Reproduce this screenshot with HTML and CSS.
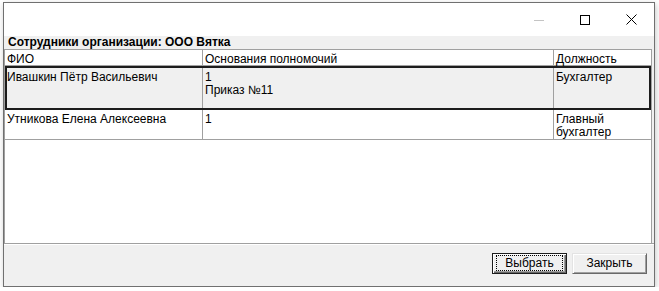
FILE: index.html
```html
<!DOCTYPE html>
<html lang="ru">
<head>
<meta charset="utf-8">
<title>Сотрудники организации</title>
<link rel="stylesheet" href="styles.css">
</head>
<body>
<div class="window">
  <div class="titlebar">
    <div class="cap-btn">
      <svg width="10" height="10" viewBox="0 0 10 10"><line x1="0" y1="5.5" x2="10" y2="5.5" stroke="#c4c4c4" stroke-width="1"/></svg>
    </div>
    <div class="cap-btn">
      <svg width="10" height="10" viewBox="0 0 10 10"><rect x="0.5" y="0.5" width="9" height="9" fill="none" stroke="#000" stroke-width="1"/></svg>
    </div>
    <div class="cap-btn">
      <svg width="11" height="11" viewBox="0 0 11 11"><path d="M0.5 0.5 L10.5 10.5 M10.5 0.5 L0.5 10.5" stroke="#000" stroke-width="1" fill="none"/></svg>
    </div>
  </div>
  <div class="client">
    <div class="caption-label">Сотрудники организации: ООО Вятка</div>
    <div class="grid">
      <div class="row header">
        <div class="cell c1">ФИО</div>
        <div class="cell c2">Основания полномочий</div>
        <div class="cell c3">Должность</div>
      </div>
      <div class="row data selected">
        <div class="cell c1">Ивашкин Пётр Васильевич</div>
        <div class="cell c2">1<br>Приказ №11</div>
        <div class="cell c3">Бухгалтер</div>
      </div>
      <div class="row data second">
        <div class="cell c1">Утникова Елена Алексеевна</div>
        <div class="cell c2">1</div>
        <div class="cell c3">Главный<br>бухгалтер</div>
      </div>
    </div>
    <div class="footer">
      <button class="btn default"><span class="focus">Выбрать</span></button>
      <button class="btn">Закрыть</button>
    </div>
  </div>
</div>
</body>
</html>
```

FILE: styles.css
```css
html, body {
  margin: 0;
  padding: 0;
  background: #ffffff;
}

body {
  font-family: "Liberation Sans", Arial, sans-serif;
  font-size: 12px;
  line-height: 13px;
  color: #000;
}

.window {
  box-sizing: border-box;
  margin: 2px 0 0 3px;
  width: 652px;
  height: 285px;
  border: 1px solid #707070;
  display: flex;
  flex-direction: column;
  box-shadow: 1px 2px 6px rgba(0, 0, 0, 0.22);
  background: #f0f0f0;
}

.titlebar {
  height: 33px;
  flex: none;
  background: #ffffff;
  display: flex;
  justify-content: flex-end;
}

.cap-btn {
  width: 46px;
  height: 33px;
  display: flex;
  align-items: center;
  justify-content: center;
}

.cap-btn svg {
  display: block;
}

.client {
  flex: 1;
  display: flex;
  flex-direction: column;
  background: #f0f0f0;
}

.caption-label {
  height: 13px;
  padding-left: 4px;
  font-weight: bold;
  line-height: 13px;
  white-space: nowrap;
}

.grid {
  box-sizing: border-box;
  height: 194px;
  margin-right: 2px;
  background: #ffffff;
  border-top: 1px solid #a0a0a0;
  border-left: 1px solid #a0a0a0;
  border-right: 1px solid #a0a0a0;
  flex: none;
}

.row {
  display: flex;
  box-sizing: border-box;
  border-bottom: 1px solid #a0a0a0;
}

.cell {
  box-sizing: border-box;
  padding-left: 2px;
  white-space: nowrap;
}

.c1 {
  width: 198px;
  border-right: 1px solid #a0a0a0;
}

.c2 {
  width: 351px;
  border-right: 1px solid #a0a0a0;
}

.c3 {
  flex: 1;
}

.header {
  height: 16px;
}

.header .cell {
  padding-top: 3px;
  line-height: 12px;
}

.selected .cell {
  padding-top: 5px;
}

.second .cell {
  padding-top: 3px;
}

.selected {
  height: 44px;
  background: #f0f0f0;
  position: relative;
}

.selected::after {
  content: "";
  position: absolute;
  left: 0;
  top: 0;
  right: 0;
  bottom: -1px;
  border: 2px solid #1c1c1c;
  pointer-events: none;
}

.second {
  height: 30px;
}

.footer {
  flex: 1;
  display: flex;
  justify-content: flex-end;
  align-items: flex-start;
  gap: 5px;
  padding: 9px 7px 0 0;
  border-top: 1px solid #a0a0a0;
  box-shadow: inset 0 1px 0 #ffffff;
}

.btn {
  box-sizing: border-box;
  width: 75px;
  height: 21px;
  padding: 0;
  margin: 0;
  font-family: "Liberation Sans", Arial, sans-serif;
  font-size: 12px;
  line-height: 13px;
  color: #000;
  background: #f0f0f0;
  border: 1px solid;
  border-color: #e3e3e3 #696969 #696969 #e3e3e3;
  box-shadow: inset 1px 1px 0 #ffffff, inset -1px -1px 0 #a0a0a0;
  display: flex;
  align-items: center;
  justify-content: center;
}

.btn.default {
  border: 1px solid #1c1c1c;
  box-shadow: inset 1px 1px 0 #ffffff, inset -1px -1px 0 #696969, inset -2px -2px 0 #a0a0a0;
  align-items: stretch;
}

.focus {
  flex: 1;
  margin: 1px 3px 2px 3px;
  border: 1px dotted #000;
  display: flex;
  align-items: center;
  justify-content: center;
}
```
